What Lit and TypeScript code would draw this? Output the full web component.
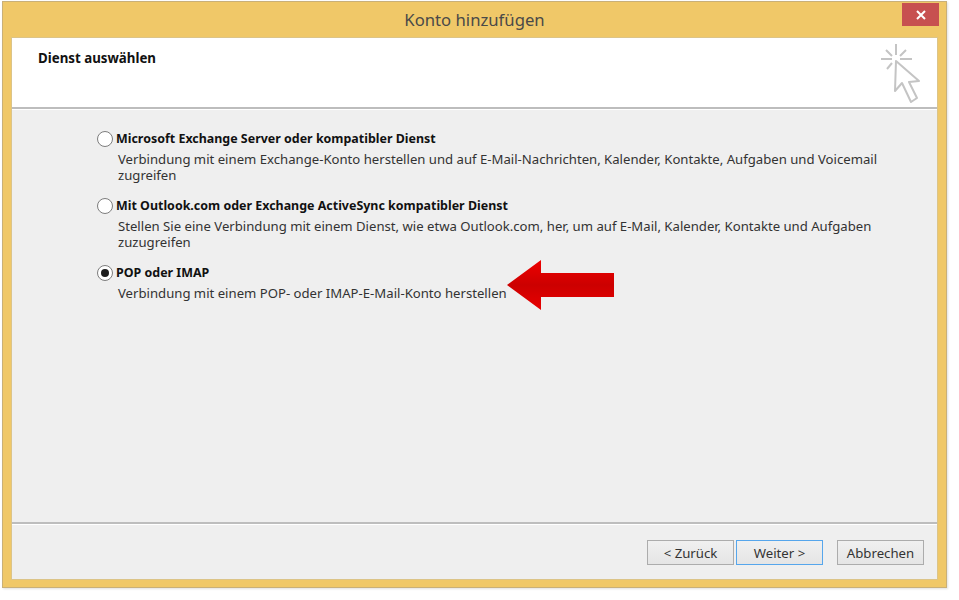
import { LitElement, html, css } from "lit";
import { customElement } from "lit/decorators.js";

const options = [
  { title: "Microsoft Exchange Server oder kompatibler Dienst", desc: ["Verbindung mit einem Exchange-Konto herstellen und auf E-Mail-Nachrichten, Kalender, Kontakte, Aufgaben und Voicemail", "zugreifen"], on: false },
  { title: "Mit Outlook.com oder Exchange ActiveSync kompatibler Dienst", desc: ["Stellen Sie eine Verbindung mit einem Dienst, wie etwa Outlook.com, her, um auf E-Mail, Kalender, Kontakte und Aufgaben", "zuzugreifen"], on: false },
  { title: "POP oder IMAP", desc: ["Verbindung mit einem POP- oder IMAP-E-Mail-Konto herstellen"], on: true },
];

@customElement("app-root")
export class AppRoot extends LitElement {
  static styles = css`
    :host { display: block; width: 959px; height: 600px; background: #fff; overflow: hidden; font-family: "Noto Sans", "Open Sans", sans-serif; color: #1a1a1a; }
    .page { padding: 1px 0 0 2px; }
    .win { position: relative; box-sizing: border-box; width: 945px; height: 587px; background: #f0c868; border: 1px solid #c9b078; box-shadow: 1px 1px 2px rgba(0,0,0,.12); display: flex; flex-direction: column; padding: 0 9px 8px 9px; }
    .titlebar { height: 36px; flex: none; display: flex; align-items: center; justify-content: center; font-size: 16.7px; color: #4a4a48; padding-bottom: 2px; box-sizing: border-box; }
    .close { position: absolute; right: 7px; top: 1px; width: 37px; height: 23px; background: #c75050; display: flex; align-items: center; justify-content: center; }
    .inner { flex: 1; display: flex; flex-direction: column; background: #efefef; position: relative; outline: 1px solid #dcc488; }
    .head { height: 69px; flex: none; background: #fff; border-bottom: 2px solid #bdbdbd; box-shadow: 0 1px 0 #fff; display: flex; justify-content: space-between; box-sizing: content-box; }
    .head h1 { margin: 0; padding: 12px 0 0 26px; font-size: 13.3px; line-height: 17px; font-weight: 700; color: #111; }
    .head svg { margin: 4px 15px 0 0; }
    .body { flex: 1; padding: 21px 0 0 85px; display: flex; flex-direction: column; gap: 14px; }
    .opt-title { display: flex; align-items: center; gap: 3px; font-size: 12.45px; line-height: 18px; font-weight: 700; color: #111; }
    .radio { box-sizing: border-box; width: 16px; height: 16px; border-radius: 50%; border: 1.5px solid #7d7d7d; background: #fff; display: flex; align-items: center; justify-content: center; flex: none; }
    .radio.on::after { content: ""; width: 8px; height: 8px; border-radius: 50%; background: #1c1c1c; }
    .desc { margin: 3px 0 0 21px; font-size: 13.15px; line-height: 16px; color: #333; white-space: nowrap; }
    .desc div { height: 16px; }
    .foot { height: 57px; flex: none; border-top: 2px solid #bdbdbd; box-shadow: inset 0 1px 0 #fff; display: flex; justify-content: flex-end; align-items: flex-start; padding: 16px 13px 0 0; box-sizing: border-box; }
    .btn { box-sizing: border-box; height: 25px; width: 87px; border: 1px solid #acacac; background: linear-gradient(#f0f0f0, #e5e5e5); display: flex; align-items: center; justify-content: center; font-size: 13.2px; color: #333; }
    .btn.primary { border-color: #56a6ec; margin: 0 14px 0 2px; }
    .arrow { position: absolute; left: 493px; top: 221px; }
  `;

  render() {
    return html`<div class="page"><div class="win">
      <div class="titlebar">Konto hinzufügen</div>
      <div class="close">
        <svg width="10" height="10" viewBox="0 0 10 10"><path d="M1 1L9 9M9 1L1 9" stroke="#fff" stroke-width="2"/></svg>
      </div>
      <div class="inner">
        <div class="head">
          <h1>Dienst auswählen</h1>
          <svg width="44" height="64" viewBox="0 0 44 64" fill="none" stroke="#c4c4c4">
            <path d="M18 2V13M3 17H14M22 17H34M8 8L14 14M28 8L22 14M9 27L14 21" stroke-width="2"/>
            <path d="M18 19L17 49L24 41L33 60L39 56L31 40L41 39Z" fill="#fff" stroke-width="2" stroke-linejoin="round"/>
          </svg>
        </div>
        <div class="body">
          ${options.map((o) => html`<div>
            <div class="opt-title"><span class="radio ${o.on ? "on" : ""}"></span>${o.title}</div>
            <div class="desc">${o.desc.map((l) => html`<div>${l}</div>`)}</div>
          </div>`)}
        </div>
        <div class="foot">
          <div class="btn">&lt; Zurück</div>
          <div class="btn primary">Weiter &gt;</div>
          <div class="btn">Abbrechen</div>
        </div>
        <svg class="arrow" width="110" height="52" viewBox="0 0 110 52">
          <defs><linearGradient id="g" x1="0" y1="0" x2="0" y2="1"><stop offset="0" stop-color="#ee0000"/><stop offset=".5" stop-color="#cc0000"/><stop offset="1" stop-color="#e80000"/></linearGradient></defs>
          <path d="M2 26L36 1V14H109V38H36V51Z" fill="url(#g)"/>
        </svg>
      </div>
    </div></div>`;
  }
}
